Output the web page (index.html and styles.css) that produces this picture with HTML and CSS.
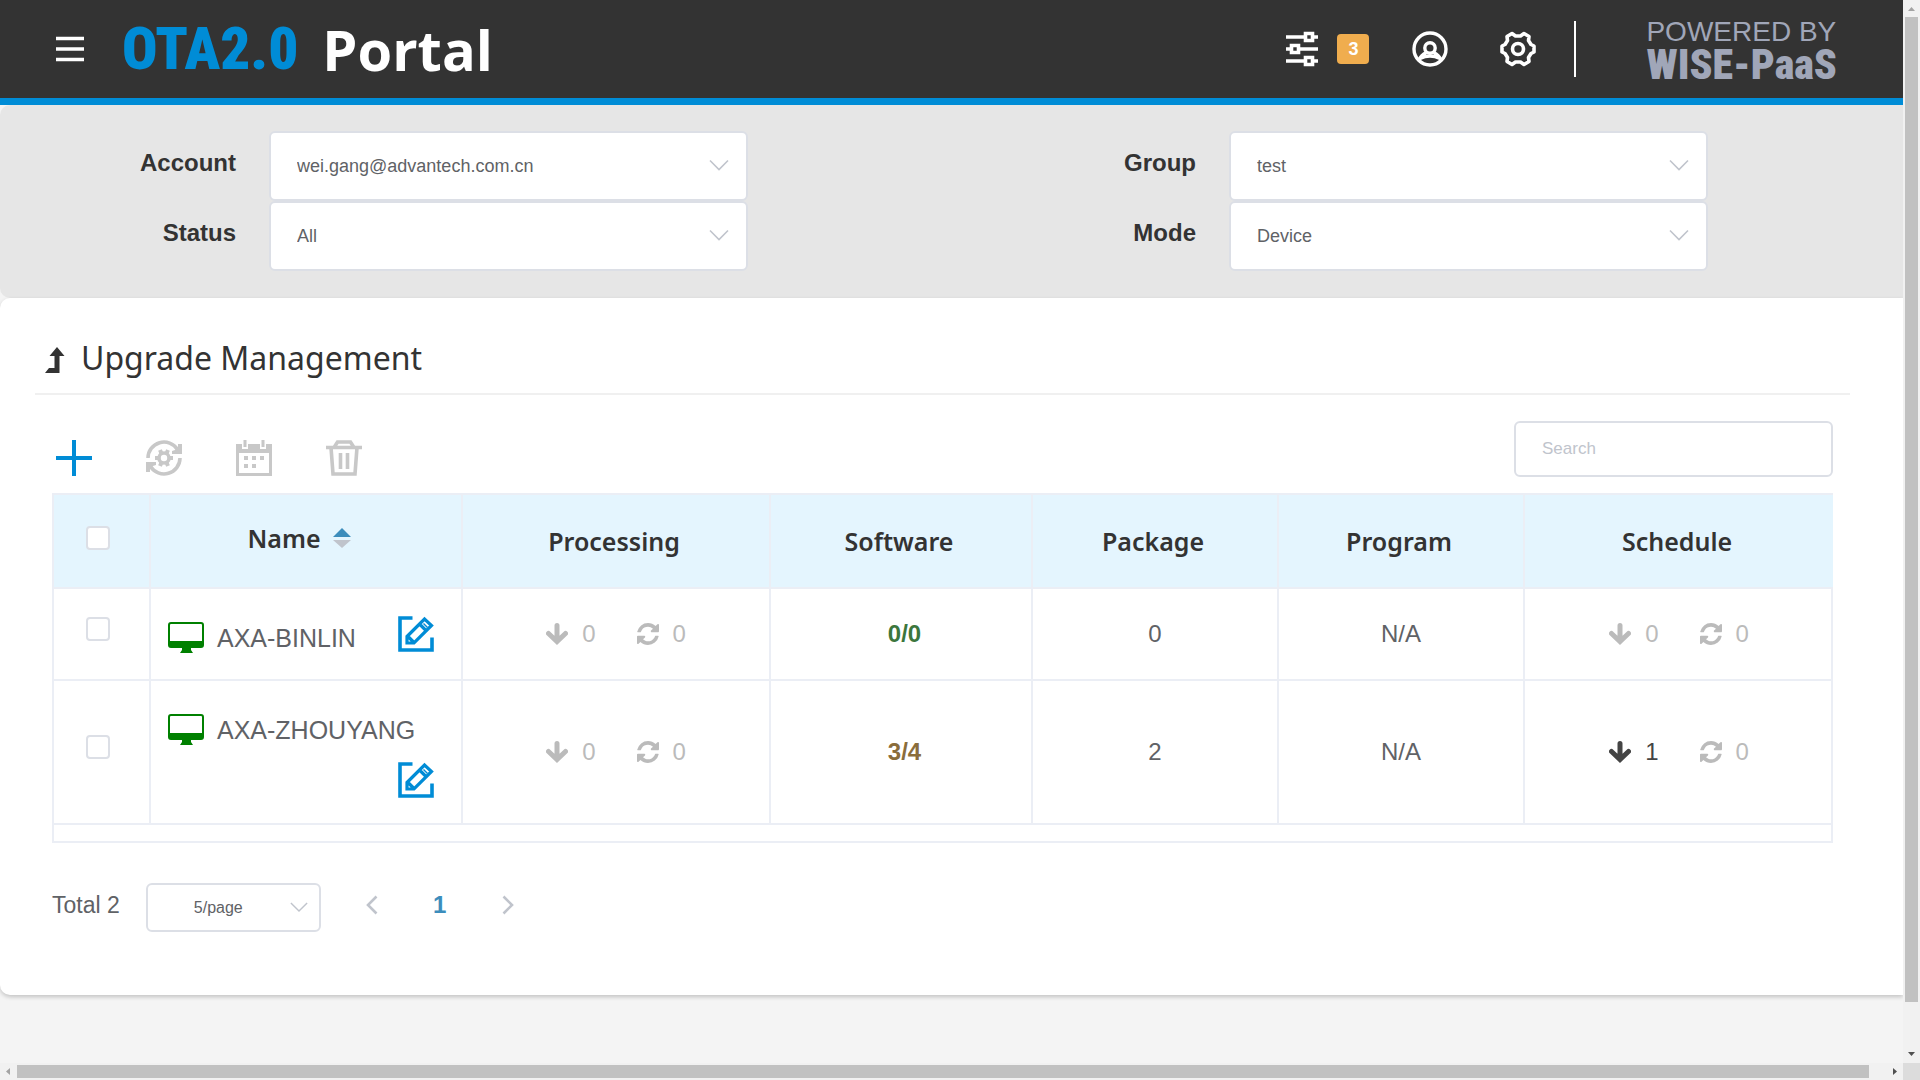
FILE: index.html
```
<!DOCTYPE html>
<html lang="en">
<head>
    <meta charset="UTF-8">
    <meta name="viewport" content="width=device-width, initial-scale=1.0">
    <title>OTA2.0 Portal</title>
    <link rel="stylesheet" href="styles.css">
</head>
<body>

<!-- Shared icons -->
<svg class="icon-defs" aria-hidden="true">
    <symbol id="icon-chevron" viewBox="0 0 20 12">
        <path d="M1 1.5 10 10.5 19 1.5" fill="none" stroke="currentColor" stroke-width="1.6"/>
    </symbol>
    <symbol id="icon-down" viewBox="0 0 22 22">
        <path d="M11 2.5V17M2.5 10.5 11 18.5 19.5 10.5" fill="none" stroke="currentColor" stroke-width="5" stroke-linecap="round"/>
    </symbol>
    <symbol id="icon-refresh" viewBox="0 0 1536 1536">
        <path fill="currentColor" d="M1511 928q0 5-1 7-64 268-268 434.500T764 1536q-146 0-282.500-55T238 1324l-129 129q-19 19-45 19t-45-19-19-45V960q0-26 19-45t45-19h448q26 0 45 19t19 45-19 45l-137 137q71 66 161 102t187 36q134 0 250-65t186-179q11-17 53-117 8-23 30-23h192q13 0 22.500 9.500t9.500 22.500zm25-800v448q0 26-19 45t-45 19h-448q-26 0-45-19t-19-45 19-45l138-138Q969 256 768 256q-134 0-250 65T332 500q-11 17-53 117-8 23-30 23H50q-13 0-22.500-9.500T18 608v-7q65-268 270-434.500T768 0q146 0 284 55.500T1297 212l130-129q19-19 45-19t45 19 19 45z"/>
    </symbol>
    <symbol id="icon-monitor" viewBox="0 0 36 32">
        <path fill="currentColor" fill-rule="evenodd" d="M3 0H33Q36 0 36 3V23Q36 26 33 26H23V28L25 31H12L14 28V26H3Q0 26 0 23V3Q0 0 3 0ZM3 2Q2 2 2 3V19H34V3Q34 2 33 2Z"/>
    </symbol>
    <symbol id="icon-edit" viewBox="0 0 36 36">
        <path fill="none" stroke="currentColor" stroke-width="3.6" d="M14.5 2H2V34H34V21.5"/>
        <path fill="none" stroke="currentColor" stroke-width="3.2" d="M9 20.5 26.5 3 33.5 9.5 16 27H9ZM21.5 8 28.5 15M10 20.5 16 26.5"/>
        <path stroke="currentColor" stroke-width="1.5" d="M25.5 7.5 29.5 11.5"/>
    </symbol>
</svg>

<div class="window">
    <div class="viewport">
        <!-- Top bar -->
        <header class="topbar">
            <button class="icon-button menu-button" aria-label="Menu">
                <svg width="28" height="26" viewBox="0 0 28 26"><path d="M0 2.5H28M0 13H28M0 23.5H28" stroke="#fff" stroke-width="3.4"/></svg>
            </button>
            <h1 class="brand"><span class="brand-ota">OTA2.0</span> <span class="brand-portal">Portal</span></h1>
            <nav class="top-actions">
                <button class="icon-button tasks-button" aria-label="Tasks">
                    <svg width="32" height="36" viewBox="0 0 32 36" fill="none" stroke="#fff" stroke-width="3.6">
                        <path d="M0 6H19M27 6H32M0 18H5M13 18H32M0 30H19M27 30H32"/>
                        <path d="M19.5 2.5H26.5V9.5H19.5ZM5.5 14.5H12.5V21.5H5.5ZM19.5 26.5H26.5V33.5H19.5Z"/>
                    </svg>
                    <span class="badge">3</span>
                </button>
                <button class="icon-button" aria-label="User">
                    <svg width="36" height="36" viewBox="0 0 36 36" fill="none" stroke="#fff" stroke-width="3.4">
                        <circle cx="18" cy="18" r="16"/>
                        <circle cx="18" cy="17" r="5.2"/>
                        <path d="M14.5 21.5Q9 24 7 29M21.5 21.5Q27 24 29 29M8 27.5Q18 22.5 28 27.5"/>
                    </svg>
                </button>
                <button class="icon-button" aria-label="Settings">
                    <svg width="36" height="36" viewBox="0 0 36 36" fill="none" stroke="#fff" stroke-width="3.6" stroke-linejoin="round">
                        <circle cx="18" cy="18" r="5.5"/>
                        <path d="M12 2.5 15.5 5H20.5L24 2.5 29 5.5 28.5 9.5 31 13.5 34 15V21L31 22.5 28.5 26.5 29 30.5 24 33.5 20.5 31H15.5L12 33.5 7 30.5 7.5 26.5 5 22.5 2 21V15L5 13.5 7.5 9.5 7 5.5Z"/>
                    </svg>
                </button>
            </nav>
            <div class="powered">
                <span class="powered-by">POWERED BY</span>
                <span class="powered-name">WISE-PaaS</span>
            </div>
        </header>

        <!-- Filters -->
        <form class="filters">
            <label for="account">Account</label>
            <div class="select-box">
                <select id="account"><option>wei.gang@advantech.com.cn</option></select>
                <svg class="chevron"><use href="#icon-chevron"/></svg>
            </div>
            <label for="group">Group</label>
            <div class="select-box">
                <select id="group"><option>test</option></select>
                <svg class="chevron"><use href="#icon-chevron"/></svg>
            </div>
            <label for="status">Status</label>
            <div class="select-box">
                <select id="status"><option>All</option></select>
                <svg class="chevron"><use href="#icon-chevron"/></svg>
            </div>
            <label for="mode">Mode</label>
            <div class="select-box">
                <select id="mode"><option>Device</option></select>
                <svg class="chevron"><use href="#icon-chevron"/></svg>
            </div>
        </form>

        <!-- Upgrade Management -->
        <main class="panel">
            <h2 class="panel-title">
                <svg width="20" height="26" viewBox="0 0 20 26" fill="#333"><path d="M12 0 19.5 9H14.5V26H0L4 21H9.5V9H4.5Z"/></svg>
                Upgrade Management
            </h2>

            <div class="content">
                <div class="toolbar">
                    <button class="icon-button add" aria-label="Add">
                        <svg width="36" height="36" viewBox="0 0 36 36"><path d="M18 0V36M0 18H36" stroke="currentColor" stroke-width="4"/></svg>
                    </button>
                    <button class="icon-button" aria-label="Upgrade">
                        <svg width="36" height="36" viewBox="0 0 36 36" fill="none" stroke="currentColor" stroke-width="3.6">
                            <path d="M2 18A16 16 0 0 1 31.5 9.5M34 18A16 16 0 0 1 4.5 26.5"/>
                            <path fill="currentColor" stroke="none" d="M36 4V14H26V11L29 10 32 7V4ZM0 32V22H10V25L7 26 4 29V32Z"/>
                            <circle cx="18" cy="18" r="5"/>
                            <path stroke-width="4" d="M14 10 15.5 13.5M22 10 20.5 13.5M14 26 15.5 22.5M22 26 20.5 22.5M9 18H12.5M23.5 18H27"/>
                        </svg>
                    </button>
                    <button class="icon-button" aria-label="Schedule">
                        <svg width="36" height="36" viewBox="0 0 36 36" fill="currentColor">
                            <path fill-rule="evenodd" d="M0 4H6V9H12V4H24V9H30V4H36V36H0ZM3 13V33H33V13Z"/>
                            <path d="M7.5 0H10.5V7H7.5ZM25.5 0H28.5V7H25.5ZM8 16H12V20H8ZM16 16H20V20H16ZM24 16H28V20H24ZM8 24H12V28H8ZM16 24H20V28H16Z"/>
                        </svg>
                    </button>
                    <button class="icon-button" aria-label="Delete">
                        <svg width="36" height="36" viewBox="0 0 36 36" fill="none" stroke="currentColor" stroke-width="3.6">
                            <path d="M0 7.5H36M8 7.5 11.5 2H24.5L28 7.5M5 7.5 7 34H29L31 7.5M14.5 13V29M21.5 13V29"/>
                        </svg>
                    </button>
                    <input class="search" type="text" placeholder="Search" aria-label="Search">
                </div>

                <div class="table-box">
                    <table>
                        <colgroup>
                            <col class="col-check">
                            <col class="col-name">
                            <col class="col-wide">
                            <col class="col-software">
                            <col class="col-count">
                            <col class="col-count">
                            <col class="col-wide">
                        </colgroup>
                        <thead>
                            <tr>
                                <th class="check"><input type="checkbox" aria-label="Select all"></th>
                                <th class="sortable">
                                    <div class="sort">
                                        Name
                                        <svg width="18" height="20" viewBox="0 0 18 20"><path d="M0 9 9 0 18 9Z" fill="#3c8dbc"/><path d="M0 12H18L9 20Z" fill="#c0c4cc"/></svg>
                                    </div>
                                </th>
                                <th>Processing</th>
                                <th>Software</th>
                                <th>Package</th>
                                <th>Program</th>
                                <th>Schedule</th>
                            </tr>
                        </thead>
                        <tbody>
                            <tr>
                                <td class="check"><input type="checkbox" aria-label="Select AXA-BINLIN"></td>
                                <td class="name-cell">
                                    <div class="name">
                                        <span class="device"><svg class="monitor"><use href="#icon-monitor"/></svg>AXA-BINLIN</span>
                                        <button class="icon-button edit" aria-label="Edit AXA-BINLIN"><svg><use href="#icon-edit"/></svg></button>
                                    </div>
                                </td>
                                <td>
                                    <div class="counts">
                                        <span class="count"><svg><use href="#icon-down"/></svg>0</span>
                                        <span class="count"><svg><use href="#icon-refresh"/></svg>0</span>
                                    </div>
                                </td>
                                <td class="software ok">0/0</td>
                                <td>0</td>
                                <td>N/A</td>
                                <td>
                                    <div class="counts">
                                        <span class="count"><svg><use href="#icon-down"/></svg>0</span>
                                        <span class="count"><svg><use href="#icon-refresh"/></svg>0</span>
                                    </div>
                                </td>
                            </tr>
                            <tr>
                                <td class="check"><input type="checkbox" aria-label="Select AXA-ZHOUYANG"></td>
                                <td class="name-cell">
                                    <div class="name">
                                        <span class="device"><svg class="monitor"><use href="#icon-monitor"/></svg>AXA-ZHOUYANG</span>
                                        <button class="icon-button edit" aria-label="Edit AXA-ZHOUYANG"><svg><use href="#icon-edit"/></svg></button>
                                    </div>
                                </td>
                                <td>
                                    <div class="counts">
                                        <span class="count"><svg><use href="#icon-down"/></svg>0</span>
                                        <span class="count"><svg><use href="#icon-refresh"/></svg>0</span>
                                    </div>
                                </td>
                                <td class="software warn">3/4</td>
                                <td>2</td>
                                <td>N/A</td>
                                <td>
                                    <div class="counts">
                                        <span class="count active"><svg><use href="#icon-down"/></svg>1</span>
                                        <span class="count"><svg><use href="#icon-refresh"/></svg>0</span>
                                    </div>
                                </td>
                            </tr>
                        </tbody>
                    </table>
                </div>

                <!-- Pagination -->
                <div class="pagination">
                    <span class="total">Total 2</span>
                    <div class="select-box page-size">
                        <select aria-label="Page size"><option>5/page</option></select>
                        <svg class="chevron"><use href="#icon-chevron"/></svg>
                    </div>
                    <button class="icon-button page" aria-label="Previous page">
                        <svg width="12" height="20" viewBox="0 0 12 20"><path d="M10.5 1.5 2 10 10.5 18.5" fill="none" stroke="currentColor" stroke-width="2.6"/></svg>
                    </button>
                    <button class="icon-button page current">1</button>
                    <button class="icon-button page" aria-label="Next page">
                        <svg width="12" height="20" viewBox="0 0 12 20"><path d="M1.5 1.5 10 10 1.5 18.5" fill="none" stroke="currentColor" stroke-width="2.6"/></svg>
                    </button>
                </div>
            </div>
        </main>
    </div>

    <!-- Scroll bars -->
    <div class="vbar">
        <svg class="dim" width="17" height="17" viewBox="0 0 17 17"><path d="M5 11H12L8.5 7Z"/></svg>
        <div class="thumb"></div>
        <svg width="17" height="17" viewBox="0 0 17 17"><path d="M5 6H12L8.5 10Z"/></svg>
    </div>
    <div class="hbar">
        <svg class="dim" width="17" height="17" viewBox="0 0 17 17"><path d="M10 5V12L6 8.5Z"/></svg>
        <div class="thumb"></div>
        <svg width="17" height="17" viewBox="0 0 17 17"><path d="M7 5V12L11 8.5Z"/></svg>
    </div>
    <div class="corner"></div>
</div>

</body>
</html>
```
FILE: styles.css
```
* {
    box-sizing: border-box;
}

body {
    margin: 0;
    font-family: "Liberation Sans", Arial, sans-serif;
    font-size: 24px;
    color: #606266;
    background-color: #f4f4f4;
}

.icon-defs {
    display: none;
}

.window {
    display: grid;
    grid-template-columns: minmax(0, 1fr) 17px;
    grid-template-rows: minmax(0, 1fr) 17px;
    height: 100vh;
}

.viewport {
    overflow: hidden;
}

.icon-button {
    display: flex;
    align-items: center;
    justify-content: center;
    padding: 0;
    border: none;
    background: none;
    color: inherit;
    font: inherit;
    cursor: pointer;
}

/* Top bar */
.topbar {
    display: flex;
    align-items: center;
    height: 105px;
    padding: 0 66px 0 56px;
    background-color: #333;
    border-bottom: 7px solid #008cd6;
}

.brand {
    display: flex;
    align-items: center;
    gap: 24px;
    margin: 0 auto 0 38px;
    line-height: 72px;
}

.brand-ota {
    font-family: "Roboto Condensed", "Liberation Sans", sans-serif;
    font-size: 59px;
    font-weight: 900;
    color: #008cd6;
}

.brand-portal {
    font-family: "Open Sans", "Noto Sans", sans-serif;
    font-size: 56px;
    color: #fff;
}

.top-actions {
    display: flex;
    align-items: center;
    gap: 52px;
    padding-right: 38px;
    margin-right: 70px;
    height: 56px;
    border-right: 2px solid #fff;
}

.tasks-button {
    gap: 19px;
    margin-right: -9px;
}

.badge {
    width: 32px;
    border-radius: 4px;
    background-color: #f0ad4e;
    color: #fff;
    font-size: 18px;
    font-weight: bold;
    line-height: 30px;
}

.powered {
    display: flex;
    flex-direction: column;
    color: #a0a6b8;
}

.powered-by {
    font-size: 28px;
    line-height: 32px;
}

.powered-name {
    font-family: "Roboto Condensed", "Liberation Sans", sans-serif;
    font-size: 42px;
    font-weight: 900;
    line-height: 34px;
}

/* Filters */
.filters {
    display: grid;
    grid-template-columns: 236px 1fr 415px 1fr;
    column-gap: 33px;
    align-items: center;
    padding: 26px 195px 27px 0;
    background-color: #e6e6e6;
    border-radius: 10px 0 0 10px;
}

.filters label {
    padding-bottom: 6px;
    text-align: right;
    font-size: 24px;
    font-weight: bold;
    color: #333;
}

.select-box {
    position: relative;
}

.select-box select {
    appearance: none;
    display: block;
    width: 100%;
    height: 70px;
    padding: 0 50px 0 26px;
    border: 2px solid #dcdfe6;
    border-radius: 6px;
    background-color: #fff;
    color: #606266;
    font-family: inherit;
    font-size: 18px;
}

/* Arrow drawn over the select */
.chevron {
    position: absolute;
    top: 50%;
    right: 19px;
    width: 20px;
    height: 12px;
    margin-top: -7px;
    color: #c0c4cc;
    pointer-events: none;
}

/* Main panel */
.panel {
    padding: 37px 53px 63px 35px;
    background-color: #fff;
    border-radius: 10px 0 0 10px;
    box-shadow: 0 2px 4px rgba(0, 0, 0, 0.2);
}

.panel-title {
    display: flex;
    align-items: center;
    gap: 16px;
    margin: 0;
    padding: 0 10px 13px;
    border-bottom: 2px solid #f0f0f0;
    font-family: "Noto Sans", "Open Sans", sans-serif;
    font-size: 32px;
    font-weight: normal;
    line-height: 45px;
    color: #333;
}

.panel-title svg {
    margin-top: 4px;
}

.content {
    padding: 26px 17px 0;
}

.toolbar {
    display: flex;
    align-items: center;
    gap: 54px;
    padding-left: 4px;
    margin-bottom: 16px;
    color: #c8c8c8;
}

.toolbar .icon-button {
    padding-top: 18px;
}

.toolbar .add {
    color: #008cd6;
}

.search {
    width: 319px;
    height: 56px;
    margin-left: auto;
    padding: 0 26px;
    border: 2px solid #dcdfe6;
    border-radius: 6px;
    font-family: inherit;
    font-size: 17px;
}

.search::placeholder {
    color: #c0c4cc;
}

/* Table */
.table-box {
    padding-bottom: 16px;
    border: 2px solid #ebeef5;
}

table {
    width: 100%;
    table-layout: fixed;
    border-spacing: 0;
    text-align: center;
}

.col-check { width: 97px; }
.col-name { width: 312px; }
.col-wide { width: 308px; }
.col-software { width: 262px; }
.col-count { width: 246px; }

th,
td {
    padding: 0;
    border-right: 2px solid #ebeef5;
    border-bottom: 2px solid #ebeef5;
}

th:last-child,
td:last-child {
    border-right: none;
}

th {
    height: 94px;
    padding-right: 4px;
    background-color: #e4f5fe;
    font-family: "Noto Sans", "Open Sans", sans-serif;
    font-size: 25px;
    font-weight: 600;
    color: #333;
}

.sortable {
    padding: 0 14px 6px 0;
}

.sort {
    display: flex;
    align-items: center;
    justify-content: center;
    gap: 12px;
}

.check {
    padding: 0 8px 10px 0;
}

th.check {
    padding-bottom: 6px;
}

.check input {
    appearance: none;
    display: block;
    width: 24px;
    height: 24px;
    margin: 0 auto;
    border: 2px solid #dcdfe6;
    border-radius: 4px;
    background-color: #fff;
}

.name-cell {
    padding: 24px 27px 16px 17px;
}

.name {
    display: flex;
    flex-wrap: wrap;
    align-items: center;
    row-gap: 7px;
}

.device {
    display: flex;
    align-items: center;
    gap: 13px;
    height: 50px;
    font-size: 25px;
}

.monitor {
    width: 36px;
    height: 32px;
    color: #008000;
}

.edit {
    margin: 0 0 9px auto;
    color: #008cd6;
}

.edit svg {
    width: 36px;
    height: 36px;
}

.counts {
    display: flex;
    justify-content: center;
    gap: 41px;
    color: #bbb;
}

.count {
    display: flex;
    align-items: center;
    gap: 14px;
}

.count svg {
    width: 22px;
    height: 22px;
}

.count.active {
    color: #444;
}

.software {
    padding-left: 7px;
    font-weight: bold;
}

.ok { color: #3c763d; }
.warn { color: #8a6d3b; }

/* Pagination */
.pagination {
    display: flex;
    align-items: center;
    margin-top: 40px;
}

.total {
    padding-bottom: 4px;
    font-size: 23px;
}

.page-size {
    width: 175px;
    margin: 0 17px 0 26px;
}

.page-size select {
    height: 49px;
    padding: 0 30px 0 0;
    font-size: 16px;
    text-align: center;
    text-align-last: center;
}

.page-size .chevron {
    right: 13px;
    width: 18px;
}

.page {
    width: 68px;
    height: 44px;
    padding-bottom: 6px;
    color: #c0c4cc;
}

.page.current {
    color: #3c8dbc;
    font-weight: bold;
}

/* Scroll bars */
.vbar,
.hbar {
    display: flex;
    background-color: #f1f1f1;
}

.vbar {
    flex-direction: column;
}

.vbar svg,
.hbar svg {
    flex: none;
    fill: #505050;
}

.vbar .dim,
.hbar .dim {
    fill: #a3a3a3;
}

.thumb {
    flex: none;
    background-color: #c1c1c1;
}

.vbar .thumb {
    height: 92.7%;
    margin: 0 2px auto;
}

.hbar .thumb {
    width: 97.3%;
    margin: 2px auto 2px 0;
}

.hbar {
    grid-row: 2;
}

.corner {
    background-color: #dcdcdc;
}
```
